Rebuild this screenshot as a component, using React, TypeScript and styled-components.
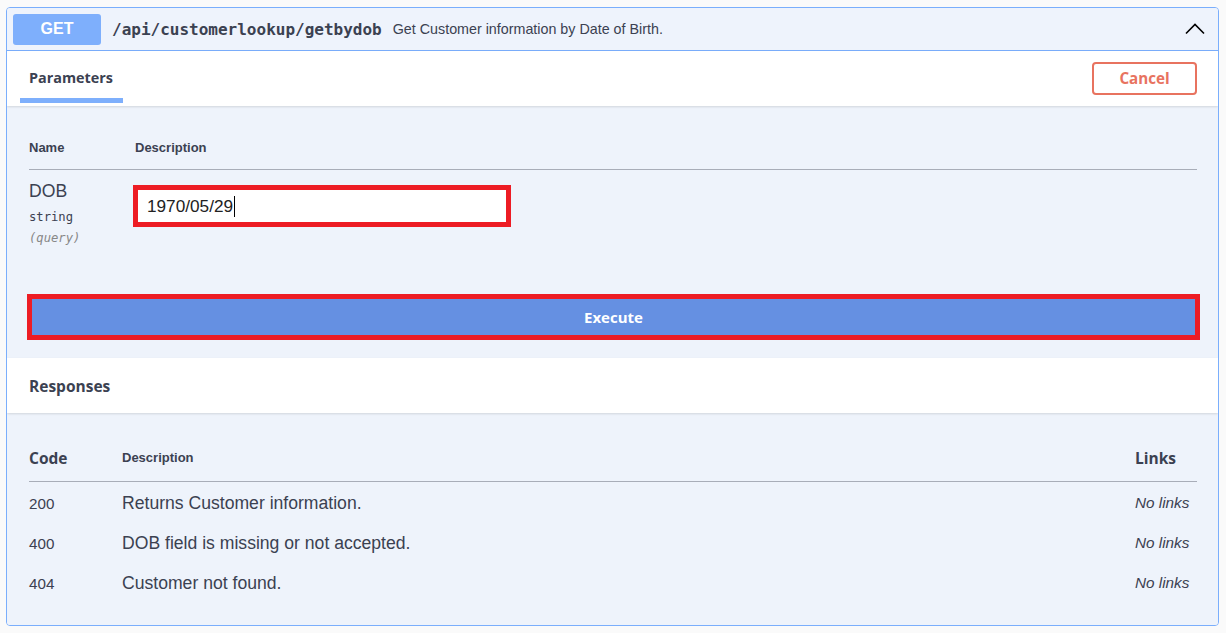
import React from "react";
import styled, { createGlobalStyle } from "styled-components";

const Global = createGlobalStyle`
  html, body { margin: 0; padding: 0; background: #fafafa; }
  body { font-family: "Liberation Sans", Arial, sans-serif; color: #3b4151; }
  * { box-sizing: border-box; }
`;

const Page = styled.div`
  width: 1226px;
  padding: 7px 7px 8px 6px;
`;

const Card = styled.div`
  border: 1px solid #7aaefc;
  border-radius: 4px;
  background: #eef3fb;
  overflow: hidden;
`;

const Summary = styled.div`
  display: flex;
  align-items: center;
  height: 43px;
  padding: 0 13px 0 6px;
  border-bottom: 1px solid #7aaefc;
  background: #eef3fc;
`;

const Method = styled.span`
  display: flex;
  align-items: center;
  justify-content: center;
  width: 88px;
  height: 31px;
  border-radius: 3px;
  background: #7eaffc;
  color: #fff;
  font-family: "Liberation Sans", Arial, sans-serif;
  font-weight: 700;
  font-size: 16px;
`;

const Path = styled.span`
  margin-left: 11px;
  font-family: "DejaVu Sans Mono", monospace;
  font-weight: 700;
  font-size: 16px;
  color: #3b4151;
`;

const Desc = styled.span`
  margin-left: 11px;
  font-size: 14.3px;
  color: #3b4151;
  flex: 1;
`;

const Chevron = styled.svg`
  width: 20px;
  height: 12px;
`;

const TabBar = styled.div`
  display: flex;
  align-items: stretch;
  justify-content: space-between;
  height: 55px;
  padding: 0 21px 0 13px;
  background: #fff;
  box-shadow: 0 1px 2px rgba(0, 0, 0, 0.12);
  position: relative;
`;

const Tab = styled.div`
  display: flex;
  align-items: center;
  padding: 6px 10px 0 9px;
  margin-bottom: 3px;
  border-bottom: 5px solid #7eaffc;
  font-family: "Open Sans", sans-serif;
  font-weight: 700;
  font-size: 14.4px;
  color: #3b4151;
`;

const CancelButton = styled.button`
  align-self: center;
  width: 105px;
  height: 33px;
  margin-bottom: 1px;
  border: 2px solid #e8735f;
  border-radius: 4px;
  background: #fff;
  color: #e8735f;
  font-family: "Open Sans", sans-serif;
  font-weight: 700;
  font-size: 15.2px;
`;

const Section = styled.div`
  background: #eef3fb;
`;

const Table = styled.div`
  padding: 20px 21px 0 22px;
`;

const HeadRow = styled.div<{ $pt?: number; $pb?: number }>`
  display: flex;
  align-items: center;
  padding: ${(p) => p.$pt ?? 11}px 0 ${(p) => p.$pb ?? 11}px;
  border-bottom: 1px solid #a8adb8;
  line-height: 20px;
`;

const HeadCell = styled.div<{ $w?: number; $size?: number; $font?: string }>`
  ${(p) => (p.$w ? `width: ${p.$w}px; flex: none;` : "flex: 1;")}
  font-family: ${(p) => p.$font ?? '"Liberation Sans", Arial, sans-serif'};
  font-weight: 700;
  font-size: ${(p) => p.$size ?? 13}px;
  color: #3b4151;
`;

const ParamRow = styled.div`
  display: flex;
  height: 124px;
  padding-top: 11px;
`;

const ParamName = styled.div`
  width: 104px;
  display: flex;
  flex-direction: column;
`;

const NameText = styled.div`
  font-size: 17.6px;
  line-height: 20px;
`;

const TypeText = styled.div<{ $italic?: boolean; $top: number }>`
  margin-top: ${(p) => p.$top}px;
  font-family: "DejaVu Sans Mono", monospace;
  font-size: 12.2px;
  line-height: 15px;
  color: ${(p) => (p.$italic ? "#888" : "#3b4151")};
  font-style: ${(p) => (p.$italic ? "italic" : "normal")};
`;

const Input = styled.div`
  width: 378px;
  height: 42px;
  margin-top: 4px;
  border: 5px solid #ed1c24;
  background: #fff;
  display: flex;
  align-items: center;
  padding-left: 9px;
  font-size: 17.2px;
  color: #222;
`;

const Caret = styled.span`
  display: inline-block;
  width: 1px;
  height: 21px;
  background: #000;
  margin-left: 1px;
`;

const ExecuteWrap = styled.div`
  padding: 0 18px 18px 20px;
`;

const ExecuteButton = styled.button`
  display: block;
  width: 100%;
  height: 46px;
  border: 5px solid #ed1c24;
  background: #6590e2;
  color: #fff;
  font-family: "Open Sans", sans-serif;
  font-weight: 700;
  font-size: 15px;
`;

const SectionHeader = styled.div`
  display: flex;
  align-items: center;
  height: 55px;
  padding-left: 22px;
  background: #fff;
  box-shadow: 0 1px 2px rgba(0, 0, 0, 0.12);
  position: relative;
  font-family: "Open Sans", sans-serif;
  font-weight: 700;
  font-size: 15.5px;
  color: #3b4151;
`;

const ResponseTable = styled.div`
  padding: 24px 21px 23px 22px;
`;

const RespRow = styled.div`
  display: flex;
  align-items: center;
  height: 40px;
  padding-top: 2px;
`;

const CodeCell = styled.div`
  width: 93px;
  font-size: 15.2px;
  color: #3b4151;
`;

const RespDesc = styled.div`
  flex: 1;
  font-size: 17.6px;
  color: #3b4151;
`;

const LinksCell = styled.div`
  width: 62px;
  padding-left: 0;
  font-size: 15.3px;
  font-style: italic;
  color: #3b4151;
`;

const responses = [
  { code: "200", desc: "Returns Customer information." },
  { code: "400", desc: "DOB field is missing or not accepted." },
  { code: "404", desc: "Customer not found." },
];

export default function App() {
  return (
    <>
      <Global />
      <Page>
        <Card>
          <Summary>
            <Method>GET</Method>
            <Path>/api/customerlookup/getbydob</Path>
            <Desc>Get Customer information by Date of Birth.</Desc>
            <Chevron viewBox="0 0 20 12">
              <polyline points="1,10.5 10,1.5 19,10.5" fill="none" stroke="#000" strokeWidth="1.6" />
            </Chevron>
          </Summary>
          <TabBar>
            <Tab>Parameters</Tab>
            <CancelButton>Cancel</CancelButton>
          </TabBar>
          <Section>
            <Table>
              <HeadRow $pt={12}>
                <HeadCell $w={106}>Name</HeadCell>
                <HeadCell>Description</HeadCell>
              </HeadRow>
              <ParamRow>
                <ParamName>
                  <NameText>DOB</NameText>
                  <TypeText $top={9}>string</TypeText>
                  <TypeText $italic $top={6}>(query)</TypeText>
                </ParamName>
                <Input>
                  1970/05/29
                  <Caret />
                </Input>
              </ParamRow>
            </Table>
            <ExecuteWrap>
              <ExecuteButton>Execute</ExecuteButton>
            </ExecuteWrap>
          </Section>
          <SectionHeader>Responses</SectionHeader>
          <Section>
            <ResponseTable>
              <HeadRow $pt={11} $pb={13}>
                <HeadCell $w={93} $size={15.5} $font='"Open Sans", sans-serif'>Code</HeadCell>
                <HeadCell>Description</HeadCell>
                <HeadCell $w={62} $size={15.5} $font='"Open Sans", sans-serif'>Links</HeadCell>
              </HeadRow>
              {responses.map((r) => (
                <RespRow key={r.code}>
                  <CodeCell>{r.code}</CodeCell>
                  <RespDesc>{r.desc}</RespDesc>
                  <LinksCell>No links</LinksCell>
                </RespRow>
              ))}
            </ResponseTable>
          </Section>
        </Card>
      </Page>
    </>
  );
}
